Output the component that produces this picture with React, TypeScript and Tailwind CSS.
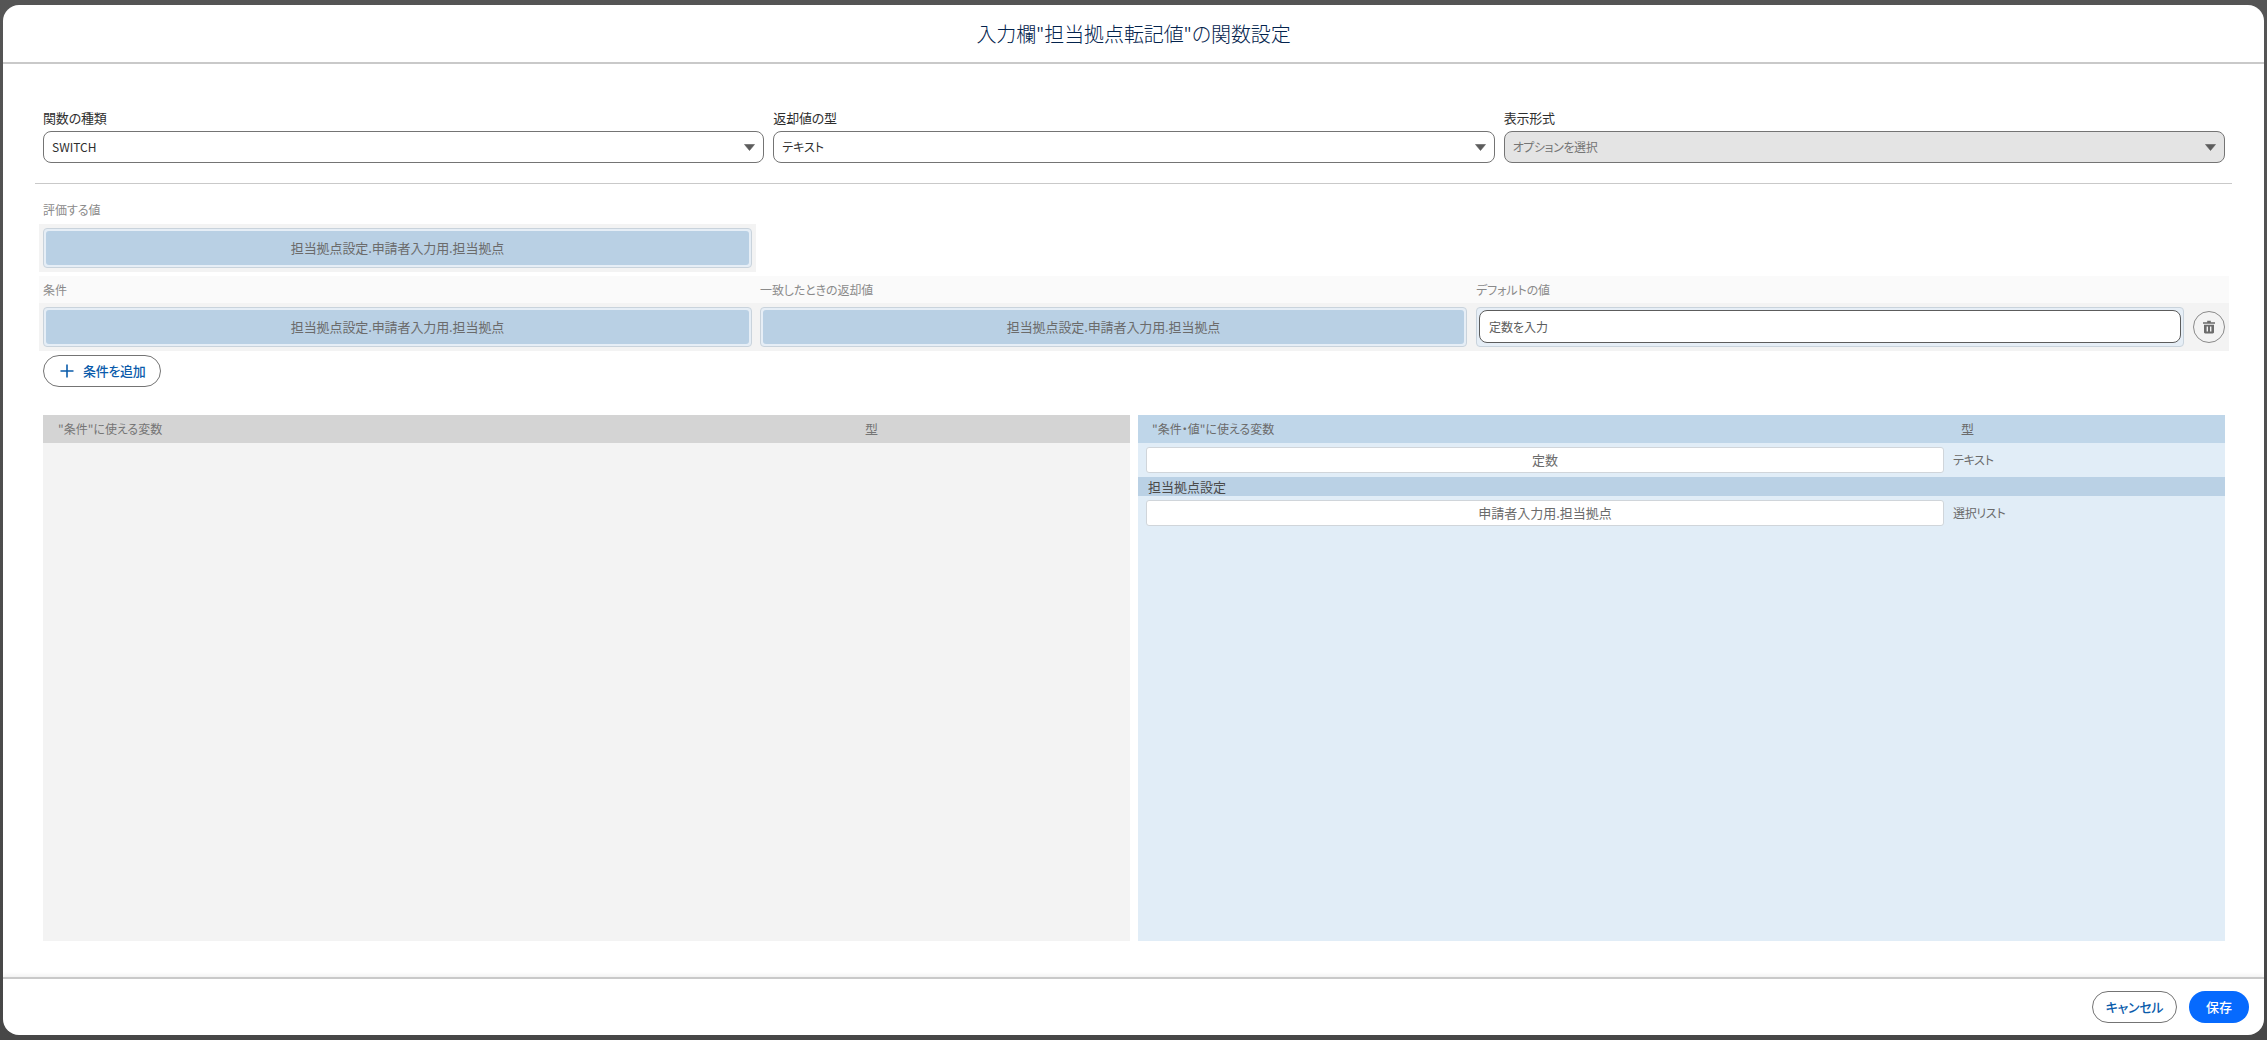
const font = "font-['Noto_Sans_CJK_JP','Liberation_Sans',sans-serif] [font-feature-settings:'palt']";

const Arrow = () => (
  <svg width="11" height="7" viewBox="0 0 11 7" className="shrink-0">
    <path d="M0.5 0.5H10.5L5.5 6.5Z" fill="#5c5c5c" stroke="#5c5c5c" strokeLinejoin="round" strokeWidth="0.6" />
  </svg>
);

const SelectBox = ({
  label,
  value,
  disabled,
}: {
  label: string;
  value: string;
  disabled?: boolean;
}) => (
  <div className="flex flex-col">
    <div className="h-[22px] text-[13px] leading-[18px] tracking-[-0.2px] text-[#2e2e2e]">{label}</div>
    <div
      className={
        disabled
          ? "flex h-[32px] items-center justify-between rounded-[8px] border border-[#747474] bg-[#e4e4e4] pl-[8px] pr-[8px] text-[12px] tracking-[-0.4px] text-[#757575]"
          : "flex h-[32px] items-center justify-between rounded-[8px] border border-[#747474] bg-white pl-[8px] pr-[8px] text-[12px] text-[#2e2e2e]"
      }
    >
      <span>{value}</span>
      <Arrow />
    </div>
  </div>
);

const DropCell = ({ text }: { text: string }) => (
  <div className="h-[40px] rounded-[4px] border border-[#c9d3dc] bg-[#e6eef6] p-[2px]">
    <div className="flex h-full items-center justify-center rounded-[3px] bg-[#b9d0e4] text-[13px] tracking-[-0.1px] text-[#6b6b6b]">
      {text}
    </div>
  </div>
);

const VarRow = ({ name, type }: { name: string; type: string }) => (
  <div className="flex items-center">
    <div className="flex h-[26px] w-[798px] items-center justify-center rounded-[3px] border border-[#d0d5da] bg-white text-[13px] text-[#6b6b6b]">
      {name}
    </div>
    <div className="ml-[9px] text-[12px] tracking-[-0.3px] text-[#6b6b6b]">{type}</div>
  </div>
);

const TrashIcon = () => (
  <svg width="14" height="14" viewBox="0 0 14 14">
    <path
      fill="#6b6b6b"
      fillRule="evenodd"
      d="M5.2 0.8H8.8V2.2H13V3.8H1V2.2H5.2ZM2 4.8H12V12.2C12 12.9 11.5 13.4 10.8 13.4H3.2C2.5 13.4 2 12.9 2 12.2ZM4.6 6.4V11.6H6V6.4ZM8 6.4V11.6H9.4V6.4Z"
    />
  </svg>
);

export default function App() {
  const path = "担当拠点設定.申請者入力用.担当拠点";
  return (
    <div className={`h-[1040px] w-[2267px] overflow-hidden bg-linear-to-b from-[#555555] to-[#474747] pb-[5px] pl-[3px] pr-[3px] pt-[5px] ${font}`}>
      <div className="flex h-full flex-col overflow-hidden rounded-[16px] bg-white">
        {/* header */}
        <div className="flex h-[59px] shrink-0 items-center justify-center border-b-2 border-[#c9c9c9] text-[20px] font-light tracking-[-0.1px] text-[#03234d]">
          入力欄"担当拠点転記値"の関数設定
        </div>

        {/* body */}
        <div className="flex min-h-0 flex-1 flex-col px-[32px]">
          <div className="grid grid-cols-3 gap-[9px] pl-[8px] pr-[7px] pt-[45px]">
            <SelectBox label="関数の種類" value="SWITCH" />
            <SelectBox label="返却値の型" value="テキスト" />
            <SelectBox label="表示形式" value="オプションを選択" disabled />
          </div>
          <div className="mt-[20px] h-px bg-[#c9c9c9]" />

          <div className="px-[4px]">
            <div className="flex h-[40px] items-end px-[4px] pb-[5px] text-[12px] leading-[18px] text-[#8a8a8a]">評価する値</div>
            <div className="w-[717px] bg-[#f3f3f3] px-[4px] py-[4px]">
              <DropCell text={path} />
            </div>

            {/* conditions */}
            <div className="mt-[4px] w-[2190px]">
              <div className="flex h-[27px] items-center gap-[8px] bg-[#fafafa] px-[4px] text-[12px] tracking-[-0.1px] text-[#8a8a8a]">
                <div className="w-[709px]">条件</div>
                <div className="w-[708px]">一致したときの返却値</div>
                <div>デフォルトの値</div>
              </div>
              <div className="flex h-[48px] items-center bg-[#f3f3f3] px-[4px]">
                <div className="w-[709px]">
                  <DropCell text={path} />
                </div>
                <div className="ml-[8px] w-[707px]">
                  <DropCell text={path} />
                </div>
                <div className="ml-[9px] h-[40px] w-[708px] rounded-[4px] border border-[#c9d3dc] bg-[#e6eef6] p-[2px]">
                  <div className="flex h-[33px] items-center rounded-[8px] border border-[#5c5c5c] bg-white pl-[9px] text-[12px] text-[#5c5c5c]">
                    定数を入力
                  </div>
                </div>
                <button className="ml-[9px] flex h-[32px] w-[32px] items-center justify-center rounded-full border border-[#8a8a8a] bg-transparent">
                  <TrashIcon />
                </button>
              </div>
            </div>

            <div className="px-[4px] pt-[4px]">
              <button className="flex h-[32px] w-[118px] items-center rounded-full border border-[#747474] bg-white pl-[16px] text-[13px] font-medium tracking-[-0.3px] text-[#0b5cab]">
                <svg width="14" height="14" viewBox="0 0 14 14" className="mr-[9px]">
                  <path d="M7 0.5V13.5M0.5 7H13.5" stroke="#0b5cab" strokeWidth="1.6" />
                </svg>
                条件を追加
              </button>
            </div>
          </div>

          {/* variable panels */}
          <div className="mt-[28px] flex h-[526px] gap-[8px] pl-[8px] pr-[7px]">
            <div className="flex w-[1087px] flex-col bg-[#f3f3f3]">
              <div className="flex h-[28px] items-center bg-[#d4d4d4] text-[12px] text-[#757575]">
                <div className="ml-[15px] w-[807px]">"条件"に使える変数</div>
                <div className="text-[13px]">型</div>
              </div>
            </div>
            <div className="flex w-[1087px] flex-col bg-[#e1edf7]">
              <div className="flex h-[28px] items-center bg-[#bfd6e9] text-[12px] text-[#6b6b6b]">
                <div className="ml-[14px] w-[809px]">"条件・値"に使える変数</div>
                <div className="text-[13px]">型</div>
              </div>
              <div className="pl-[8px] pt-[4px]">
                <VarRow name="定数" type="テキスト" />
              </div>
              <div className="mt-[4px] flex h-[19px] items-center bg-[#bad1e5] pl-[10px] text-[13px] text-[#4a4a4a]">
                担当拠点設定
              </div>
              <div className="pl-[8px] pt-[4px]">
                <VarRow name="申請者入力用.担当拠点" type="選択リスト" />
              </div>
            </div>
          </div>
        </div>

        {/* footer */}
        <div className="flex h-[58px] shrink-0 items-start justify-end gap-[12px] border-t-2 border-[#c9c9c9] pr-[15px] pt-[12px] shadow-[0_-2px_4px_rgba(0,0,0,0.06)]">
          <button className="h-[32px] w-[85px] rounded-full border border-[#747474] bg-white text-[13px] font-medium tracking-[-0.3px] text-[#0b5cab]">
            キャンセル
          </button>
          <button className="h-[32px] w-[60px] rounded-full bg-[#066afe] text-[13px] font-medium text-white">
            保存
          </button>
        </div>
      </div>
    </div>
  );
}
